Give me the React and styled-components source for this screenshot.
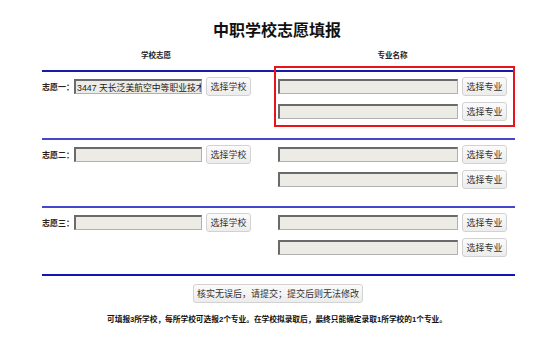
import React from 'react';
import styled, { createGlobalStyle } from 'styled-components';

const GlobalStyles = createGlobalStyle`
    html, body {
        margin: 0;
        padding: 0;
        background: #fff;
    }
    body {
        font-family: "Liberation Sans", "Noto Sans CJK SC", sans-serif;
        color: #111;
    }
`

const choices = [
    { label: '志愿一：', school: '3447 天长泛美航空中等职业技术学校' },
    { label: '志愿二：', school: '' },
    { label: '志愿三：', school: '' },
];

const App = () => {
    return (
        <>
        <GlobalStyles />
        <Page>
            <Title>中职学校志愿填报</Title>
            <Table>
                <HeadRow>
                    <HeadCell>学校志愿</HeadCell>
                    <HeadCell>专业名称</HeadCell>
                </HeadRow>
                {choices.map((choice, index) => (
                    <Row key={choice.label} first={index === 0} last={index === choices.length - 1}>
                        <SchoolCell>
                            <Label>{choice.label}</Label>
                            <Field width={128} readOnly value={choice.school} />
                            <Button>选择学校</Button>
                        </SchoolCell>
                        <MajorCell>
                            {index === 0 && <Highlight />}
                            <MajorLine>
                                <Field width={180} readOnly value="" />
                                <Button>选择专业</Button>
                            </MajorLine>
                            <MajorLine>
                                <Field width={180} readOnly value="" />
                                <Button>选择专业</Button>
                            </MajorLine>
                        </MajorCell>
                    </Row>
                ))}
            </Table>
            <Actions>
                <SubmitButton>核实无误后，请提交；提交后则无法修改</SubmitButton>
            </Actions>
            <Note>可填报3所学校，每所学校可选报2个专业。在学校拟录取后，最终只能确定录取1所学校的1个专业。</Note>
        </Page>
        </>
    );
};

const Page = styled.div`
    width: 554px;
    padding-top: 21px;
`

const Title = styled.h1`
    margin: 0;
    text-align: center;
    font-size: 16px;
    line-height: 20px;
    font-weight: bold;
    color: #111;
`

const Table = styled.div`
    width: 473px;
    margin: 9px 0 0 42px;
`

const HeadRow = styled.div`
    display: grid;
    grid-template-columns: 228px 245px;
    height: 12px;
    margin-bottom: 8px;
`

const HeadCell = styled.div`
    text-align: center;
    font-size: 7.5px;
    line-height: 12px;
    font-weight: bold;
    color: #222;
`

const Row = styled.div`
    display: grid;
    grid-template-columns: 228px 245px;
    height: 66px;
    border-top: 2px solid ${(p) => (p.first ? '#1a1aa8' : '#4646cc')};
    border-bottom: ${(p) => (p.last ? '2px solid #1414b4' : 'none')};
`

const SchoolCell = styled.div`
    display: flex;
    align-items: center;
    align-self: start;
    padding-top: 5px;
    height: 19px;
`

const Label = styled.span`
    font-size: 8px;
    font-weight: bold;
    color: #222;
    width: 32px;
`

const Field = styled.input`
    box-sizing: border-box;
    width: ${(p) => p.width}px;
    height: 15px;
    margin: 0 2px 0 0;
    padding: 0 0 0 1px;
    background: #ecebe5;
    border-style: solid;
    border-width: 2px 1px 1px 2px;
    border-color: #6a6a6a #b0b0b0 #b0b0b0 #6a6a6a;
    font-family: "Liberation Sans", "Noto Sans CJK SC", sans-serif;
    font-size: 8.8px;
    color: #222;
    outline: none;
`

const Button = styled.button`
    box-sizing: border-box;
    width: 45px;
    height: 19px;
    margin-left: 2px;
    padding: 0;
    border: 1px solid #d2d2d2;
    border-radius: 3px;
    background: linear-gradient(#fbfbfb, #ececec);
    font-family: "Liberation Sans", "Noto Sans CJK SC", sans-serif;
    font-size: 9px;
    color: #333;
`

const MajorCell = styled.div`
    position: relative;
    display: flex;
    flex-direction: column;
    gap: 6px;
    padding: 5px 0 0 8px;
`

const MajorLine = styled.div`
    display: flex;
    align-items: center;
    height: 19px;
`

const Highlight = styled.div`
    position: absolute;
    top: -6px;
    left: 4px;
    width: 241px;
    height: 61px;
    box-sizing: border-box;
    border: 2px solid #e8141b;
    pointer-events: none;
`

const Actions = styled.div`
    display: flex;
    justify-content: center;
    margin-top: 8px;
`

const SubmitButton = styled(Button)`
    width: 170px;
    margin-left: 2px;
`

const Note = styled.p`
    margin: 11px 0 0;
    text-align: center;
    font-size: 7.7px;
    line-height: 12px;
    font-weight: bold;
    color: #111;
`

export default App
